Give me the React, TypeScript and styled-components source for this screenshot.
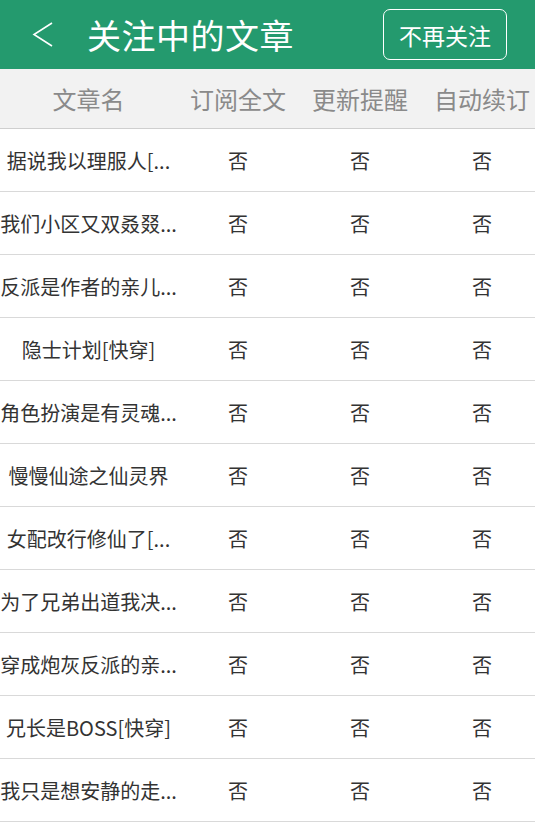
import styled, { createGlobalStyle } from "styled-components";

const GlobalStyle = createGlobalStyle`
  html, body {
    margin: 0;
    padding: 0;
    background: #ffffff;
    overflow: hidden;
  }
  body {
    font-family: "Noto Sans CJK SC", "Noto Sans", sans-serif;
  }
`;

const rows = [
  "据说我以理服人[...",
  "我们小区又双叒叕...",
  "反派是作者的亲儿...",
  "隐士计划[快穿]",
  "角色扮演是有灵魂...",
  "慢慢仙途之仙灵界",
  "女配改行修仙了[...",
  "为了兄弟出道我决...",
  "穿成炮灰反派的亲...",
  "兄长是BOSS[快穿]",
  "我只是想安静的走...",
];

const App = () => {
  return (
    <Page>
      <GlobalStyle />
      <TopBar>
        <BackButton>
          <svg width="22" height="26" viewBox="0 0 22 26">
            <polyline
              points="20,1 2,12.5 20,24"
              fill="none"
              stroke="#ffffff"
              strokeWidth="1.6"
              strokeLinejoin="miter"
            />
          </svg>
        </BackButton>
        <Title>关注中的文章</Title>
        <UnfollowButton>不再关注</UnfollowButton>
      </TopBar>
      <HeadRow>
        <NameCell>文章名</NameCell>
        <Cell>订阅全文</Cell>
        <Cell>更新提醒</Cell>
        <Cell>自动续订</Cell>
      </HeadRow>
      {rows.map((name) => (
        <Row key={name}>
          <NameCell>{name}</NameCell>
          <Cell>否</Cell>
          <Cell>否</Cell>
          <Cell>否</Cell>
        </Row>
      ))}
    </Page>
  );
};

export default App;

const Page = styled.div`
  width: 543px;
  display: flex;
  flex-direction: column;
`;

const TopBar = styled.div`
  height: 69px;
  background: #249a6e;
  display: flex;
  align-items: center;
  padding-left: 32px;
  color: #ffffff;
`;

const BackButton = styled.div`
  width: 22px;
  height: 26px;
  display: flex;
`;

const Title = styled.h1`
  margin: 0 0 0 33px;
  font-size: 34px;
  font-weight: 400;
  letter-spacing: 0.5px;
  line-height: 1;
  flex: 1;
`;

const UnfollowButton = styled.button`
  margin-right: 36px;
  width: 124px;
  height: 51px;
  border: 1.5px solid #ffffff;
  border-radius: 7px;
  background: transparent;
  color: #ffffff;
  font-family: "Noto Sans CJK SC", sans-serif;
  font-size: 23px;
  padding: 0;
`;

const Row = styled.div`
  display: flex;
  height: 63px;
  flex-shrink: 0;
  box-sizing: border-box;
  border-bottom: 1px solid #d9d9d9;
  background: #ffffff;
  color: #333333;
  font-size: 20px;
`;

const HeadRow = styled(Row)`
  height: 60px;
  background: #f2f2f2;
  color: #8a8a8a;
  font-size: 24px;
  border-bottom-color: #cfcfcf;
`;

const Cell = styled.div`
  width: 122px;
  display: flex;
  align-items: center;
  justify-content: center;
  white-space: nowrap;
`;

const NameCell = styled(Cell)`
  width: 177px;
`;
